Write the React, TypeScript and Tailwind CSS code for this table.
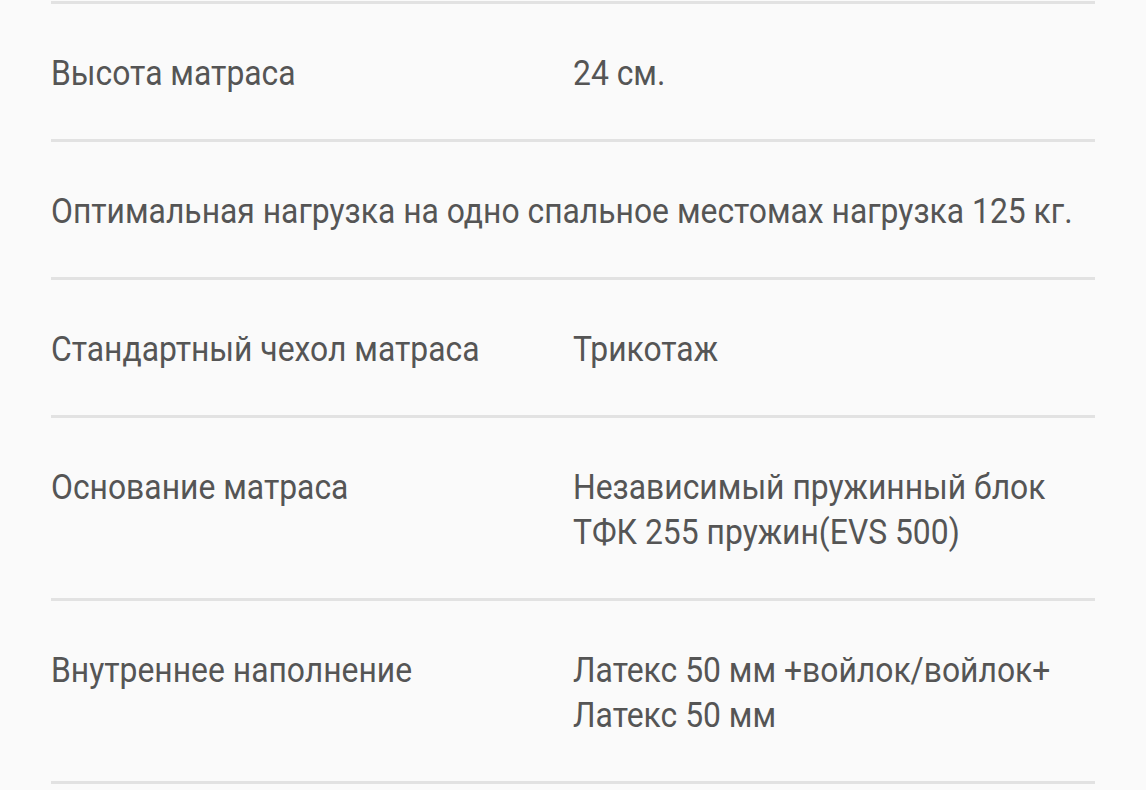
import React from 'react';

const rows: { label: string; value?: string[] }[] = [
  { label: 'Высота матраса', value: ['24 см.'] },
  { label: 'Оптимальная нагрузка на одно спальное местомах нагрузка 125 кг.' },
  { label: 'Стандартный чехол матраса', value: ['Трикотаж'] },
  { label: 'Основание матраса', value: ['Независимый пружинный блок', 'ТФК 255 пружин(EVS 500)'] },
  { label: 'Внутреннее наполнение', value: ['Латекс 50 мм +войлок/войлок+', 'Латекс 50 мм'] },
];

// text in the shot is a bit narrow for its height, so squeeze it horizontally
function Txt({ children }: { children: React.ReactNode }) {
  return <span className="inline-block origin-left scale-x-[0.91] whitespace-nowrap">{children}</span>;
}

export default function App() {
  return (
    <div className="min-h-screen overflow-hidden bg-[#fafafa] pt-[1px] font-['Roboto',sans-serif] text-[#555555]">
      <div className="ml-[51px] w-[1044px] border-t-[3px] border-[#e2e2e2]">
        {rows.map((r) => (
          <div key={r.label} className="flex border-b-[3px] border-[#e2e2e2] pt-[47px] pb-[43px] text-[35px] leading-[45px]">
            {r.value ? (
              <>
                <div className="w-[522px] shrink-0"><Txt>{r.label}</Txt></div>
                <div>
                  {r.value.map((v) => (
                    <div key={v}><Txt>{v}</Txt></div>
                  ))}
                </div>
              </>
            ) : (
              <div><Txt>{r.label}</Txt></div>
            )}
          </div>
        ))}
      </div>
    </div>
  );
}
